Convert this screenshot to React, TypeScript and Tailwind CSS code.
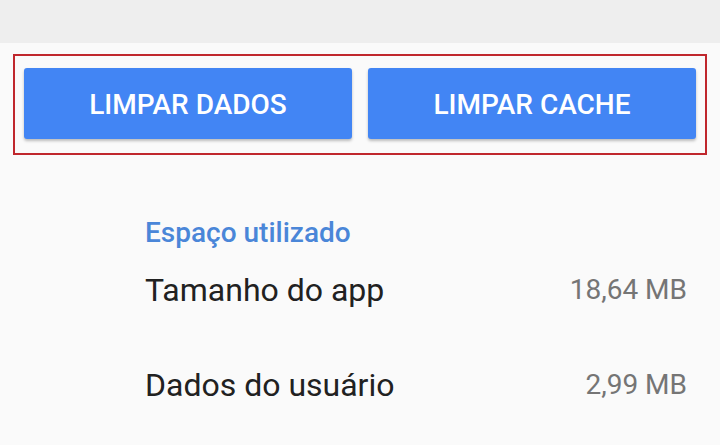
export default function App() {
  return (
    <div className="w-[720px] h-[445px] overflow-hidden bg-[#fafafa] font-['Roboto',sans-serif]">
      <div className="h-[43px] bg-[#eeeeee]" />
      <div className="mx-[13px] mt-[11px] border-2 border-[#c0272d] px-[9px] pt-[12px] pb-[14px] flex gap-[16px]">
        <button className="flex-1 h-[71px] pt-[3px] rounded-[3px] bg-[#4285f4] text-white text-[28px] font-medium shadow-[0_2px_3px_rgba(0,0,0,0.25)]">
          LIMPAR DADOS
        </button>
        <button className="flex-1 h-[71px] pt-[3px] rounded-[3px] bg-[#4285f4] text-white text-[28px] font-medium shadow-[0_2px_3px_rgba(0,0,0,0.25)]">
          LIMPAR CACHE
        </button>
      </div>
      <div className="pl-[145px] pr-[33px] pt-[62px]">
        <div className="text-[#4a86d8] text-[28px] font-medium leading-[32px]">Espaço utilizado</div>
        <div className="flex justify-between items-center mt-[23px] h-[36px]">
          <span className="text-[#212121] text-[32px] leading-[36px]">Tamanho do app</span>
          <span className="text-[#757575] text-[28px] leading-[36px]">18,64 MB</span>
        </div>
        <div className="flex justify-between items-center mt-[59px] h-[36px]">
          <span className="text-[#212121] text-[32px] leading-[36px]">Dados do usuário</span>
          <span className="text-[#757575] text-[28px] leading-[36px]">2,99 MB</span>
        </div>
      </div>
    </div>
  );
}
